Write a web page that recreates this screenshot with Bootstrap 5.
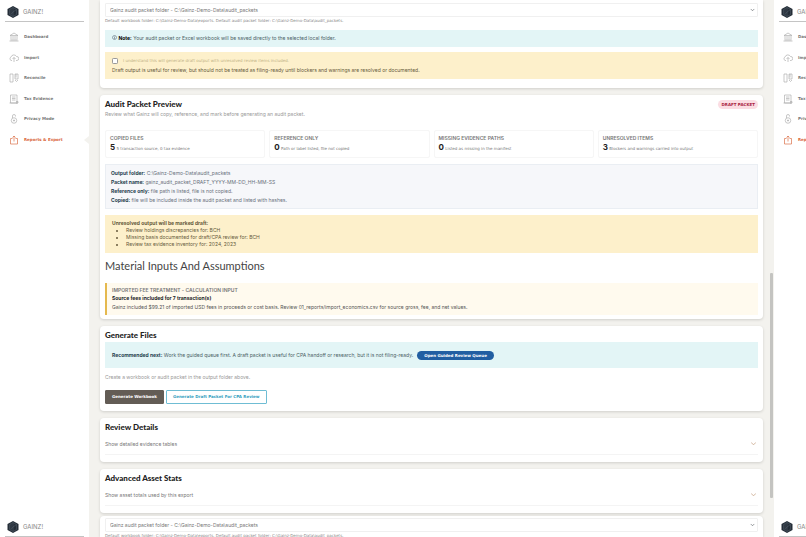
<!DOCTYPE html>
<html lang="en">
<head>
<meta charset="utf-8">
<meta name="viewport" content="width=device-width, initial-scale=1">
<title>Gainz! Reports &amp; Export</title>
<link href="https://cdn.jsdelivr.net/npm/bootstrap@5.3.0/dist/css/bootstrap.min.css" rel="stylesheet">
<style>
body{font-family:Inter,"Open Sans",sans-serif;font-size:5px;line-height:7px;color:#555;background:#f3f2ee}
.shell{height:100vh}
.side{width:89px;background:#fff;padding:0 5px;position:relative}
.side-next{width:32px;overflow:hidden;white-space:nowrap}
.side-next>*{width:79px;flex-shrink:0}
.brand{height:22px;border-bottom:1px solid #c4c4c4;gap:4px;padding:2px 0 0 2px;font-size:6px;color:#888;text-decoration:none}
.brand svg{width:12px;height:12px}
.menu{height:117px;margin-top:8px}
.menu a{height:14px;gap:5px;padding-left:4px;font:700 4px/6px "DejaVu Sans",sans-serif;color:#777;text-decoration:none}
.menu svg{width:10px;height:10px;fill:none;stroke:#aaa;stroke-width:1.3}
.menu a.on{color:#d9663c}
.menu a.on svg{stroke:#d9663c}
.notch{position:absolute;right:0;top:136px;border:4px solid transparent;border-right:5px solid #f3f2ee;border-left:0}
.area{padding:0 7px 0 11px;gap:7px;min-width:0}
.panel{background:#fff;border-radius:4px;padding:5px 5px 7px;box-shadow:0 1px 3px #00000026}
.panel-first{border-radius:0 0 4px 4px;padding:3px 5px 9px}
.panel-preview{padding-bottom:4px}
.panel-next{margin-top:-4px;padding:2px 5px 0;border-radius:4px 4px 0 0;flex:1 0 0;min-height:0}
.title{font:900 8px/9px Lato,sans-serif;color:#222;margin:0}
.pick{height:14px;border:1px solid #f0f0f0;border-radius:1px;padding:0 4px;font-size:5px;line-height:12px;color:#777;background-size:5px 4px;background-position:right 2px center}
.hint{display:block;font:400 4px/7px "DejaVu Sans",sans-serif;color:#888}
.info{background:#e3f5f6;color:#4b6265;padding:5px 7px}
.note{margin:6px 0 5px}
.info svg{width:5px;height:5px;fill:none;stroke:#456}
.next{margin:2px 0 6px;min-height:26px}
.warnbox{background:#fdf0cb;color:#665a3c;padding:5px 7px}
.warnbox ul{padding-left:14px}
.marked{margin-top:6px}
.consent{gap:5px;margin-bottom:3px}
.tick{width:6px;height:6px;margin:0;border:1px solid #999;border-radius:1px;background:#fff;flex-shrink:0}
.pale{color:#bfb184;font:400 4px/7px "DejaVu Sans",sans-serif}
.soft{color:#999}
.sub{margin:2px 0 12px}
.make{margin-bottom:9px}
.pill{font:700 4px/9px "DejaVu Sans",sans-serif;background:#fbdde3;color:#a8233f;padding:0 3px;border-radius:5px}
.stat{border:1px solid #f6f6f6;border-radius:2px;padding:4px;height:28px}
.stat h3,.kicker{font:600 5px/7px Inter,sans-serif;color:#777;margin:0}
.stat strong{font:700 8px/10px Inter,sans-serif;color:#222}
.stat span{font:400 4px/10px "DejaVu Sans",sans-serif;color:#777}
.facts{background:#f6f7fa;border:1px solid #eaeef3;padding:4px 5px 3px;color:#69717c;margin-top:6px}
.facts div{line-height:9px}
.facts b,.info b{color:#26414f}
.big{font:400 11px/12px Lato,sans-serif;color:#444;margin:7px 0 11px}
.fee{background:#fffaee;border-left:2px solid #e5b94e;padding:4px 5px 3px}
.fee p{line-height:9px}
.go{font:700 4px/7px "DejaVu Sans",sans-serif;border:0;border-radius:5px;background:#215ea2;color:#fff;padding:1px 7px}
.acts{gap:2px}
.act{font:700 4px/6px "DejaVu Sans",sans-serif;border:1px solid #635c55;background:#635c55;color:#fff;border-radius:1px;padding:3px 6px;height:14px}
.act-line{background:#fff;border-color:#6fbdd4;color:#35a0c0}
.fold{border:0;border-bottom:1px solid #f4f4f4;background:none;color:#777;padding:0 2px 0 0;height:21px;width:100%;margin-top:2px}
.fold svg{width:5px;height:4px;fill:none;stroke:#caa78c}
.track{width:4px}
.track-top{flex:273}.thumb{flex:225;background:#c4c4c1;margin-right:1px;border-radius:1px}.track-end{flex:39}
</style>
</head>
<body class="overflow-hidden">
<svg class="d-none">
<symbol id="logo" viewBox="0 0 24 24"><path d="M12 0 23 6v12l-11 6L1 18V6z" fill="#242d37"/><path d="M5 7l7-4 7 4v10l-7 4-7-4zM8 6v11M12 3v9l-4 5M19 7l-7 5v9" fill="none" stroke="#56636f"/></symbol>
<symbol id="bank" viewBox="0 0 20 20"><path d="M2 7l8-5 8 5zM1 18h18M3 16h14M4 8v7M8 8v7M12 8v7M16 8v7"/></symbol>
<symbol id="cloud" viewBox="0 0 20 20"><path d="M6 15H4a4 4 0 0 1 0-7 6 6 0 0 1 11-1 4 4 0 0 1 1 8h-2M10 18V9M7 12l3-3 3 3"/></symbol>
<symbol id="recon" viewBox="0 0 20 20"><path d="M2 2h6v16H2zM12 2h6v10h-6zM14 2v7M12 14l3 3 3-3"/></symbol>
<symbol id="tax" viewBox="0 0 20 20"><path d="M3 2h13v16H3zM1 18h17M6 6h7M6 9h7M6 12h7M14 15h4v3h-4"/></symbol>
<symbol id="lock" viewBox="0 0 20 20"><circle cx="10" cy="13" r="5.5"/><path d="M7 8V4a3 3 0 0 1 6 0v1M10 11v4M8 13h4"/></symbol>
<symbol id="share" viewBox="0 0 20 20"><path d="M7 7H3v11h14V7h-4M10 13V2M7 5l3-3 3 3"/></symbol>
</svg>
<div class="shell d-flex">
<aside class="side d-flex flex-column flex-shrink-0">
<a href="#" class="brand d-flex align-items-center"><svg><use href="#logo"/></svg>GAINZ!</a>
<nav class="menu d-flex flex-column justify-content-between">
<a href="#" class="d-flex align-items-center"><svg><use href="#bank"/></svg>Dashboard</a>
<a href="#" class="d-flex align-items-center"><svg><use href="#cloud"/></svg>Import</a>
<a href="#" class="d-flex align-items-center"><svg><use href="#recon"/></svg>Reconcile</a>
<a href="#" class="d-flex align-items-center"><svg><use href="#tax"/></svg>Tax Evidence</a>
<a href="#" class="d-flex align-items-center"><svg><use href="#lock"/></svg>Privacy Mode</a>
<a href="#" class="on d-flex align-items-center"><svg><use href="#share"/></svg>Reports &amp; Export</a>
</nav>
<span class="notch"></span>
<a href="#" class="brand d-flex align-items-center mt-auto"><svg><use href="#logo"/></svg>GAINZ!</a>
</aside>
<main class="area d-flex flex-column flex-grow-1">
<section class="panel panel-first">
<select class="pick form-select" aria-label="Output folder"><option>Gainz audit packet folder - C:\Gainz-Demo-Data\audit_packets</option></select>
<small class="hint">Default workbook folder: C:\Gainz-Demo-Data\exports. Default audit packet folder: C:\Gainz-Demo-Data\audit_packets.</small>
<div class="info note"><svg viewBox="0 0 10 10" class="align-baseline"><circle cx="5" cy="5" r="4"/><path d="M5 4v4M5 2v1"/></svg> <b class="text-black">Note:</b> Your audit packet or Excel workbook will be saved directly to the selected local folder.</div>
<div class="warnbox"><div class="consent d-flex align-items-center"><input class="tick form-check-input" type="checkbox" id="ok"><label for="ok" class="pale">I understand this will generate draft output with unresolved review items included.</label></div>
<div>Draft output is useful for review, but should not be treated as filing-ready until blockers and warnings are resolved or documented.</div></div>
</section>
<section class="panel panel-preview">
<div class="d-flex justify-content-between align-items-center"><h2 class="title">Audit Packet Preview</h2><span class="pill">DRAFT PACKET</span></div>
<p class="soft sub">Review what Gainz will copy, reference, and mark before generating an audit packet.</p>
<div class="row row-cols-4 gx-1">
<div class="col"><div class="stat"><h3>COPIED FILES</h3><strong>5</strong> <span>5 transaction source, 0 tax evidence</span></div></div>
<div class="col"><div class="stat"><h3>REFERENCE ONLY</h3><strong>0</strong> <span>Path or label listed, file not copied</span></div></div>
<div class="col"><div class="stat"><h3>MISSING EVIDENCE PATHS</h3><strong>0</strong> <span>Listed as missing in the manifest</span></div></div>
<div class="col"><div class="stat"><h3>UNRESOLVED ITEMS</h3><strong>3</strong> <span>Blockers and warnings carried into output</span></div></div>
</div>
<div class="facts"><div><b>Output folder:</b> C:\Gainz-Demo-Data\audit_packets</div><div><b>Packet name:</b> gainz_audit_packet_DRAFT_YYYY-MM-DD_HH-MM-SS</div><div><b>Reference only:</b> file path is listed, file is not copied.</div><div><b>Copied:</b> file will be included inside the audit packet and listed with hashes.</div></div>
<div class="warnbox marked"><b>Unresolved output will be marked draft:</b><ul class="mb-0"><li>Review holdings discrepancies for: BCH</li><li>Missing basis documented for draft/CPA review for: BCH</li><li>Review tax evidence inventory for: 2024, 2023</li></ul></div>
<h1 class="big">Material Inputs And Assumptions</h1>
<div class="fee"><div class="kicker">IMPORTED FEE TREATMENT - CALCULATION INPUT</div><p class="mb-0 fw-bold text-dark">Source fees included for 7 transaction(s)</p><p class="mb-0">Gainz included $99.21 of imported USD fees in proceeds or cost basis. Review 01_reports/import_economics.csv for source gross, fee, and net values.</p></div>
</section>
<section class="panel">
<h2 class="title">Generate Files</h2>
<div class="info next d-flex align-items-center"><span><b>Recommended next:</b> Work the guided queue first. A draft packet is useful for CPA handoff or research, but it is not filing-ready.</span><button class="go ms-1">Open Guided Review Queue</button></div>
<p class="soft make">Create a workbook or audit packet in the output folder above.</p>
<div class="acts d-flex"><button class="act">Generate Workbook</button><button class="act act-line">Generate Draft Packet For CPA Review</button></div>
</section>
<section class="panel"><h2 class="title">Review Details</h2><button class="fold d-flex justify-content-between align-items-center">Show detailed evidence tables<svg viewBox="0 0 6 4"><path d="M0 0l3 3 3-3"/></svg></button></section>
<section class="panel"><h2 class="title">Advanced Asset Stats</h2><button class="fold d-flex justify-content-between align-items-center">Show asset totals used by this export<svg viewBox="0 0 6 4"><path d="M0 0l3 3 3-3"/></svg></button></section>
<section class="panel panel-next overflow-hidden">
<select class="pick form-select" aria-label="Output folder"><option>Gainz audit packet folder - C:\Gainz-Demo-Data\audit_packets</option></select>
<small class="hint">Default workbook folder: C:\Gainz-Demo-Data\exports. Default audit packet folder: C:\Gainz-Demo-Data\audit_packets.</small>
</section>
</main>
<div class="track d-flex flex-column flex-shrink-0"><div class="track-top"></div><div class="thumb"></div><div class="track-end"></div></div>
<aside class="side side-next d-flex flex-column flex-shrink-0">
<a href="#" class="brand d-flex align-items-center"><svg class="flex-shrink-0"><use href="#logo"/></svg>GAINZ!</a>
<nav class="menu d-flex flex-column justify-content-between">
<a href="#" class="d-flex align-items-center"><svg><use href="#bank"/></svg>Dashboard</a>
<a href="#" class="d-flex align-items-center"><svg><use href="#cloud"/></svg>Import</a>
<a href="#" class="d-flex align-items-center"><svg><use href="#recon"/></svg>Reconcile</a>
<a href="#" class="d-flex align-items-center"><svg><use href="#tax"/></svg>Tax Evidence</a>
<a href="#" class="d-flex align-items-center"><svg><use href="#lock"/></svg>Privacy Mode</a>
<a href="#" class="on d-flex align-items-center"><svg><use href="#share"/></svg>Reports &amp; Export</a>
</nav>
<a href="#" class="brand d-flex align-items-center mt-auto"><svg class="flex-shrink-0"><use href="#logo"/></svg>GAINZ!</a>
</aside>
</div>
<script src="https://cdn.jsdelivr.net/npm/bootstrap@5.3.0/dist/js/bootstrap.bundle.min.js"></script>
</body>
</html>
